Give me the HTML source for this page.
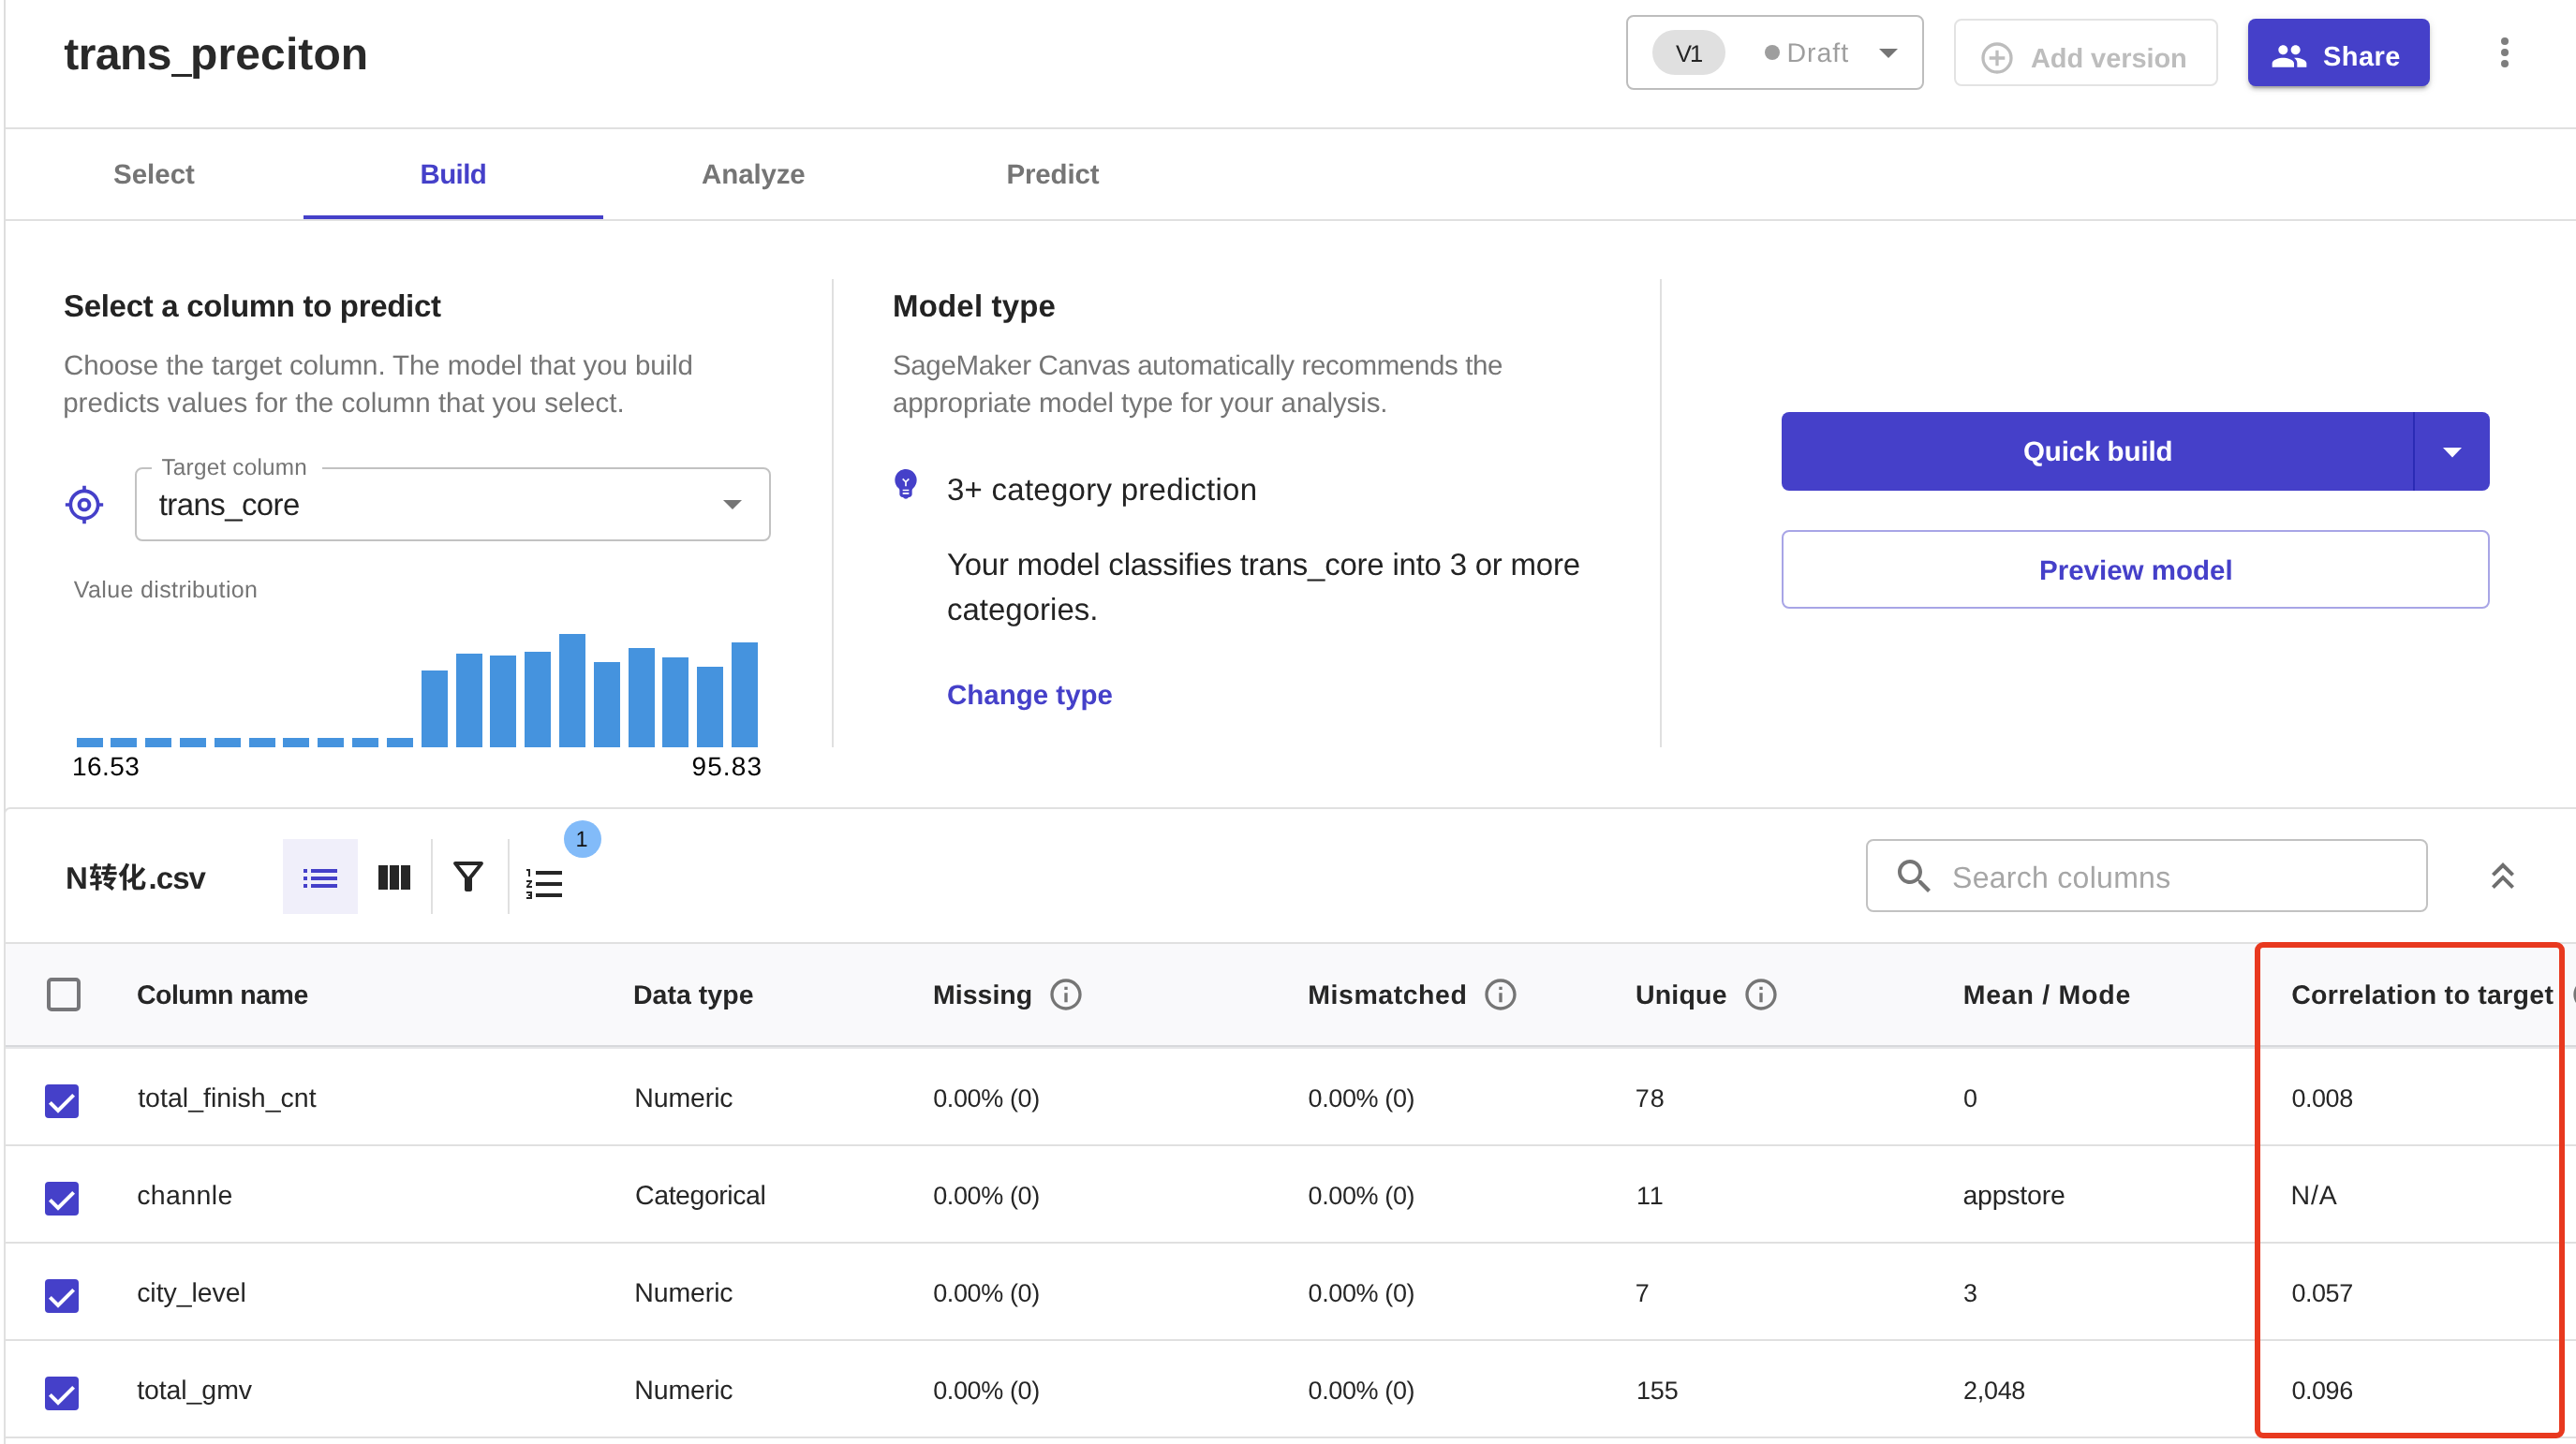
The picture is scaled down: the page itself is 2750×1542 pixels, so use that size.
<!DOCTYPE html>
<html><head><meta charset="utf-8"><title>trans_preciton</title>
<style>
html,body{margin:0;padding:0;background:#fff;}
body{width:2750px;height:1542px;overflow:hidden;position:relative;font-family:"Liberation Sans",sans-serif;color:#232323;}
.a{position:absolute;}
.t{position:absolute;white-space:nowrap;line-height:1;}
#w{position:absolute;left:0;top:0;width:2750px;height:1542px;overflow:hidden;will-change:transform;text-rendering:geometricPrecision;}
.b{font-weight:bold;}
.hl{position:absolute;background:#e0e0e0;}
svg{position:absolute;overflow:visible;}
</style></head><body><div id="w">
<!-- left edge line -->
<div class="hl" style="left:4px;top:0;width:2px;height:1542px;background:#dedede"></div>

<!-- ===== HEADER ===== -->
<div class="t b" id="title1" style="left:68.3px;top:35px;font-size:48px;letter-spacing:-0.55px;color:#292929">trans</div><div class="a" style="left:183px;top:78.6px;width:22.2px;height:3.5px;background:#292929"></div><div class="t b" id="title2" style="left:203.1px;top:35px;font-size:48px;letter-spacing:0.10px;color:#292929">preciton</div>
<div class="hl" style="left:6px;top:136px;width:2744px;height:2px"></div>

<!-- version select -->
<div class="a" style="left:1736px;top:16px;width:314px;height:76px;border:2px solid #bdbdbd;border-radius:8px"></div>
<div class="a" style="left:1764px;top:32px;width:78px;height:48px;border-radius:24px;background:#e0e0e0"></div>
<div class="t" id="v1" style="left:1789px;top:46px;font-size:25.5px;letter-spacing:-2px;color:#232323">V1</div>
<div class="a" style="left:1884px;top:48px;width:16px;height:16px;border-radius:8px;background:#9e9e9e"></div>
<div class="t" id="draft" style="left:1907.5px;top:43px;font-size:28.5px;color:#9e9e9e;letter-spacing:0.95px">Draft</div>
<svg style="left:2004px;top:52px" width="24" height="12" viewBox="0 0 24 12"><path d="M2 0h20L12 10z" fill="#757575"/></svg>

<!-- add version -->
<div class="a" style="left:2086px;top:20px;width:278px;height:68px;border:2px solid #e3e3e3;border-radius:8px"></div>
<svg style="left:2114.3px;top:44.2px" width="36" height="36" viewBox="0 0 36 36"><circle cx="18" cy="18" r="15" fill="none" stroke="#bdbdbd" stroke-width="3.3"/><path d="M18 9.700v16.600M9.700 18h16.600" stroke="#bdbdbd" stroke-width="3.3" fill="none"/></svg>
<div class="t b" id="addv" style="left:2168px;top:49px;font-size:29px;color:#bdbdbd;letter-spacing:-0.08px">Add version</div>

<!-- share -->
<div class="a" style="left:2400px;top:20px;width:194px;height:72px;border-radius:8px;background:#4540c9;box-shadow:0 6px 2px -4px rgba(0,0,0,.2),0 4px 4px 0 rgba(0,0,0,.14),0 2px 10px 0 rgba(0,0,0,.12)"></div>
<svg style="left:2424px;top:40px" width="40" height="40" viewBox="0 0 24 24"><path fill="#fff" d="M16 11c1.66 0 2.99-1.34 2.99-3S17.66 5 16 5c-1.66 0-3 1.34-3 3s1.34 3 3 3zm-8 0c1.66 0 2.99-1.34 2.99-3S9.66 5 8 5C6.34 5 5 6.34 5 8s1.34 3 3 3zm0 2c-2.33 0-7 1.17-7 3.500V19h14v-2.500c0-2.330-4.670-3.500-7-3.500zm8 0c-.29 0-.62.02-.97.05 1.160.84 1.970 1.970 1.970 3.450V19h6v-2.500c0-2.330-4.670-3.500-7-3.500z"/></svg>
<div class="t b" id="share" style="left:2480px;top:47px;font-size:29px;letter-spacing:0.42px;color:#fff">Share</div>

<!-- kebab -->
<div class="a" style="left:2670px;top:40px;width:8px;height:8px;border-radius:4px;background:#7e7e7e"></div>
<div class="a" style="left:2670px;top:52px;width:8px;height:8px;border-radius:4px;background:#7e7e7e"></div>
<div class="a" style="left:2670px;top:64px;width:8px;height:8px;border-radius:4px;background:#7e7e7e"></div>

<!-- ===== TABS ===== -->
<div class="t b" id="tab1" style="left:121px;top:172px;font-size:29.5px;color:#757575">Select</div>
<div class="t b" id="tab2" style="left:448.5px;letter-spacing:-0.6px;top:172px;font-size:29.5px;color:#4540c9">Build</div>
<div class="t b" id="tab3" style="left:749.12px;letter-spacing:-0.15px;top:172px;font-size:29.5px;color:#757575">Analyze</div>
<div class="t b" id="tab4" style="left:1074.5px;letter-spacing:-0.15px;top:172px;font-size:29.5px;color:#757575">Predict</div>
<div class="a" style="left:324px;top:230px;width:320px;height:4px;background:#4540c9"></div>
<div class="hl" style="left:6px;top:234px;width:2744px;height:2px"></div>


<!-- ===== SECTION 2 ===== -->
<div class="t b" id="h1" style="left:68px;top:310px;font-size:33px;letter-spacing:-0.31px;color:#232323">Select a column to predict</div>
<div class="t" id="d1a" style="left:68px;top:376px;font-size:29.5px;letter-spacing:-0.1px;color:#757575">Choose the target column. The model that you build</div>
<div class="t" id="d1b" style="left:67.2px;top:416px;font-size:29.5px;color:#757575;letter-spacing:0.02px">predicts values for the column that you select.</div>

<svg style="left:68px;top:517px" width="44" height="44" viewBox="0 0 24 24"><path fill="#4540c9" d="M12 8c-2.21 0-4 1.79-4 4s1.790 4 4 4 4-1.790 4-4-1.790-4-4-4zm8.940 3c-.46-4.170-3.770-7.480-7.940-7.940V1h-2v2.060C6.830 3.520 3.520 6.830 3.060 11H1v2h2.060c.46 4.170 3.770 7.480 7.940 7.940V23h2v-2.060c4.170-.46 7.480-3.770 7.940-7.940H23v-2h-2.060zM12 19c-3.870 0-7-3.130-7-7s3.130-7 7-7 7 3.130 7 7-3.130 7-7 7z"/><circle cx="12" cy="12" r="1.85" fill="#fff"/></svg>

<div class="a" style="left:144.3px;top:498.6px;width:675px;height:75px;border:2px solid #c2c2c2;border-radius:8px"></div>
<div class="a" style="left:162px;top:495px;width:182px;height:10px;background:#fff"></div>
<div class="t" id="lbl" style="left:172.500px;top:488px;font-size:24.3px;letter-spacing:0.22px;color:#757575">Target column</div>
<div class="t" id="tc" style="left:169.8px;top:522px;font-size:33px;letter-spacing:-0.6px;color:#232323">trans_core</div>
<svg style="left:770px;top:534px" width="24" height="12" viewBox="0 0 24 12"><path d="M2 0h20L12 10z" fill="#757575"/></svg>

<div class="t" id="vd" style="left:78.8px;top:618px;font-size:25px;letter-spacing:0.37px;color:#757575">Value distribution</div>
<style>.bar{width:28px;background:#4593de}</style>
<div class="a bar" style="left:81.5px;top:788.0px;height:10.0px"></div>
<div class="a bar" style="left:118.3px;top:788.0px;height:10.0px"></div>
<div class="a bar" style="left:155.1px;top:788.0px;height:10.0px"></div>
<div class="a bar" style="left:192.0px;top:788.0px;height:10.0px"></div>
<div class="a bar" style="left:228.8px;top:788.0px;height:10.0px"></div>
<div class="a bar" style="left:265.6px;top:788.0px;height:10.0px"></div>
<div class="a bar" style="left:302.4px;top:788.0px;height:10.0px"></div>
<div class="a bar" style="left:339.2px;top:788.0px;height:10.0px"></div>
<div class="a bar" style="left:376.1px;top:788.0px;height:10.0px"></div>
<div class="a bar" style="left:412.9px;top:788.0px;height:10.0px"></div>
<div class="a bar" style="left:449.7px;top:716.1px;height:81.9px"></div>
<div class="a bar" style="left:486.5px;top:698.1px;height:99.9px"></div>
<div class="a bar" style="left:523.3px;top:700.1px;height:97.9px"></div>
<div class="a bar" style="left:560.2px;top:695.7px;height:102.3px"></div>
<div class="a bar" style="left:597.0px;top:677.2px;height:120.8px"></div>
<div class="a bar" style="left:633.8px;top:706.5px;height:91.5px"></div>
<div class="a bar" style="left:670.6px;top:692.0px;height:106.0px"></div>
<div class="a bar" style="left:707.4px;top:702.1px;height:95.9px"></div>
<div class="a bar" style="left:744.3px;top:712.1px;height:85.9px"></div>
<div class="a bar" style="left:781.1px;top:686.4px;height:111.6px"></div>

<div class="t" id="n1" style="left:77.12px;top:805px;font-size:28px;color:#000;letter-spacing:0.40px">16.53</div>
<div class="t" id="n2" style="left:738.5px;top:805px;font-size:28px;color:#000;letter-spacing:1.10px">95.83</div>

<div class="hl" style="left:888px;top:298px;width:2px;height:500px"></div>
<div class="hl" style="left:1772px;top:298px;width:2px;height:500px"></div>

<div class="t b" id="h2" style="left:953px;top:310px;font-size:33px;color:#232323;letter-spacing:0.18px">Model type</div>
<div class="t" id="d2a" style="left:953px;top:376px;font-size:29.5px;letter-spacing:-0.36px;color:#757575">SageMaker Canvas automatically recommends the</div>
<div class="t" id="d2b" style="left:953px;top:416px;font-size:29.5px;letter-spacing:-0.11px;color:#757575">appropriate model type for your analysis.</div>
<svg style="left:947px;top:496px" width="40" height="40" viewBox="0 0 24 24"><path fill="#4540c9" d="M12 3c-.46 0-.93.04-1.400.14-2.760.53-4.960 2.760-5.480 5.520-.48 2.610.48 5.010 2.220 6.560.43.38.66.91.66 1.470V19c0 1.100.9 2 2 2h.28c.35.6.98 1 1.720 1s1.380-.4 1.720-1H14c1.100 0 2-.9 2-2v-2.310c0-.55.22-1.090.64-1.460C18.090 13.950 19 12.080 19 10c0-3.870-3.130-7-7-7zm2 16h-4v-1h4v1zm0-2h-4v-1h4v1zm-1.500-5.590V14h-1v-2.590L9.670 9.590l.71-.71L12 10.500l1.620-1.620.71.71-1.830 1.820z"/></svg>
<div class="t" id="cat" style="left:1011px;top:506px;font-size:33px;letter-spacing:0.26px;color:#232323">3+ category prediction</div>
<div class="t" id="m1" style="left:1011px;top:586px;font-size:33px;letter-spacing:-0.23px;color:#232323">Your model classifies trans_core into 3 or more</div>
<div class="t" id="m2" style="left:1011px;top:634px;font-size:33px;color:#232323">categories.</div>
<div class="t b" id="chg" style="left:1011px;top:728px;font-size:29.5px;color:#4540c9">Change type</div>

<div class="a" style="left:1902px;top:440px;width:756px;height:84px;border-radius:8px;background:#4540c9"></div>
<div class="a" style="left:2576px;top:440px;width:2px;height:84px;background:#2b2bb5"></div>
<div class="t b" id="qb" style="left:2160px;top:468px;font-size:29.5px;letter-spacing:-0.1px;color:#fff">Quick build</div>
<svg style="left:2606px;top:477.5px" width="24" height="12" viewBox="0 0 24 12"><path d="M2 0h20L12 10.500z" fill="#fff"/></svg>
<div class="a" style="left:1902px;top:566px;width:752px;height:80px;border:2px solid #a8a5e6;border-radius:8px"></div>
<div class="t b" id="pm" style="left:2177.04px;top:595px;font-size:29.5px;color:#4540c9">Preview model</div>


<!-- ===== SECTION 3 : data panel ===== -->
<div class="a" style="left:4px;top:862px;width:2760px;height:700px;border:2px solid #e0e0e0;border-radius:7px 0 0 7px;box-sizing:border-box"></div>
<div class="t b" id="fn1" style="left:70px;top:920.5px;font-size:33px;color:#262626">N</div>
<svg style="left:95.04px;top:921.4px" width="61.4" height="30.7" viewBox="0 -880 2000 1000"><g transform="scale(1,-1)" fill="#262626"><path d="M73 310C81 319 119 325 150 325H225V211L28 185L51 70L225 99V-88H339V119L453 140L448 243L339 227V325H414V433H339V573H225V433H165C193 493 220 563 243 635H423V744H276C284 772 291 801 297 829L181 850C176 815 170 779 162 744H36V635H136C117 566 99 511 90 490C72 446 58 417 37 411C50 383 68 331 73 310ZM427 557V446H548C528 375 507 309 489 256H756C729 220 700 181 670 143C639 162 607 179 577 195L500 118C609 57 738 -36 802 -95L880 -1C851 24 810 54 765 84C829 166 896 256 948 331L863 373L845 367H649L671 446H967V557H701L721 634H932V743H748L770 834L651 848L627 743H462V634H600L579 557Z"/><path transform="translate(1000,0)" d="M284 854C228 709 130 567 29 478C52 450 91 385 106 356C131 380 156 408 181 438V-89H308V241C336 217 370 181 387 158C424 176 462 197 501 220V118C501 -28 536 -72 659 -72C683 -72 781 -72 806 -72C927 -72 958 1 972 196C937 205 883 230 853 253C846 88 838 48 794 48C774 48 697 48 677 48C637 48 631 57 631 116V308C751 399 867 512 960 641L845 720C786 628 711 545 631 472V835H501V368C436 322 371 284 308 254V621C345 684 379 750 406 814Z"/></g></svg>
<div class="t b" id="fn2" style="left:158.6px;top:920.5px;font-size:33px;letter-spacing:-0.97px;color:#262626">.csv</div>

<div class="a" style="left:302px;top:896px;width:80px;height:80px;background:#f0effa"></div>
<svg style="left:318px;top:914px" width="48" height="48" viewBox="0 0 24 24"><path fill="#4540c9" d="M3 13h2v-2H3v2zm0 4h2v-2H3v2zm0-8h2V7H3v2zm4 4h14v-2H7v2zm0 4h14v-2H7v2zM7 7v2h14V7H7z"/></svg>
<svg style="left:396px;top:914px" width="48" height="48" viewBox="0 0 24 24"><path fill="#262626" d="M10 18h5V5h-5v13zm-6 0h5V5H4v13zM16 5v13h5V5h-5z"/></svg>
<div class="hl" style="left:460px;top:896px;width:2px;height:80px"></div>
<svg style="left:476px;top:912px" width="48" height="48" viewBox="0 0 24 24"><path fill="#262626" d="M7 6h10l-5.010 6.300L7 6zm-2.750-.39C6.270 8.200 10 13 10 13v6c0 .55.45 1 1 1h2c.55 0 1-.45 1-1v-6s3.720-4.800 5.740-7.390c.51-.66.04-1.610-.79-1.610H5.040c-.83 0-1.300.95-.79 1.610z"/></svg>
<div class="hl" style="left:542px;top:896px;width:2px;height:80px"></div>
<svg style="left:558px;top:920px" width="48" height="48" viewBox="0 0 24 24"><path fill="#262626" d="M2 17h2v.5H3v1h1v.5H2v1h3v-4H2v1zm1-9h1V4H2v1h1v3zm-1 3h1.800L2 13.100v.9h3v-1H3.200L5 10.900V10H2v1zm5-6v2h14V5H7zm0 14h14v-2H7v2zm0-6h14v-2H7v2z"/></svg>
<div class="a" style="left:602px;top:876px;width:40px;height:40px;border-radius:20px;background:#82bbf9"></div>
<div class="t" id="bdg" style="left:614.58px;top:885.3px;font-size:23.5px;color:#111">1</div>

<div class="a" style="left:1992px;top:896px;width:596px;height:74px;border:2px solid #c2c2c2;border-radius:8px"></div>
<svg style="left:2020px;top:911.8px" width="48" height="48" viewBox="0 0 24 24"><path fill="#757575" d="M15.500 14h-.79l-.28-.27C15.410 12.590 16 11.110 16 9.500 16 5.910 13.090 3 9.500 3S3 5.910 3 9.500 5.910 16 9.500 16c1.610 0 3.090-.59 4.230-1.570l.27.28v.79l5 4.990L20.490 19l-4.990-5zm-6 0C7.010 14 5 11.990 5 9.500S7.010 5 9.500 5 14 7.010 14 9.500 11.990 14 9.500 14z"/></svg>
<div class="t" id="srch" style="left:2084px;top:921px;font-size:32px;letter-spacing:0.29px;color:#a6a6a6">Search columns</div>
<svg style="left:2648.3px;top:911.4px" width="48" height="48" viewBox="0 0 24 24"><path fill="#6e6e6e" d="M6 17.590L7.410 19 12 14.420 16.590 19 18 17.590l-6-6zM6 11l1.410 1.410L12 7.830l4.590 4.580L18 11l-6-6z"/></svg>

<!-- table header -->
<div class="a" style="left:6px;top:1006px;width:2744px;height:112px;background:#f9f9fb"></div>
<div class="hl" style="left:6px;top:1006px;width:2744px;height:2px"></div>
<div class="a" style="left:6px;top:1116px;width:2744px;height:2px;background:#d8d9dc"></div>
<div class="a" style="left:6px;top:1118px;width:2744px;height:2px;background:#e6e7e9"></div>
<div class="a" style="left:50px;top:1044px;width:28px;height:28px;border:4px solid #77777a;border-radius:5px"></div>
<style>.th{font-weight:bold;font-size:28.5px;color:#262626;top:1049.0px} .r{font-size:28.5px;color:#262626} .n{font-size:27px;color:#262626}</style>
<div class="t th" id="th1" style="left:146px;letter-spacing:-0.52px">Column name</div>
<div class="t th" id="th2" style="left:676px;letter-spacing:0.03px">Data type</div>
<div class="t th" id="th3" style="left:996.0px;letter-spacing:0.01px">Missing</div>
<div class="t th" id="th4" style="left:1396.3px;letter-spacing:0.54px">Mismatched</div>
<div class="t th" id="th5" style="left:1746px;letter-spacing:0.18px">Unique</div>
<div class="t th" id="th6" style="left:2095.7px;letter-spacing:0.76px">Mean / Mode</div>
<div class="t th" id="th7" style="left:2446.2px;letter-spacing:0.29px">Correlation to target</div>
<svg style="left:1118.0px;top:1041.9px" width="40" height="40" viewBox="0 0 24 24"><path fill="#757575" d="M11 7h2v2h-2zm0 4h2v6h-2zm1-9C6.480 2 2 6.480 2 12s4.480 10 10 10 10-4.480 10-10S17.520 2 12 2zm0 18c-4.410 0-8-3.590-8-8s3.590-8 8-8 8 3.590 8 8-3.590 8-8 8z"/></svg>
<svg style="left:1581.9px;top:1041.9px" width="40" height="40" viewBox="0 0 24 24"><path fill="#757575" d="M11 7h2v2h-2zm0 4h2v6h-2zm1-9C6.480 2 2 6.480 2 12s4.480 10 10 10 10-4.480 10-10S17.520 2 12 2zm0 18c-4.410 0-8-3.590-8-8s3.590-8 8-8 8 3.590 8 8-3.590 8-8 8z"/></svg>
<svg style="left:1859.9px;top:1041.9px" width="40" height="40" viewBox="0 0 24 24"><path fill="#757575" d="M11 7h2v2h-2zm0 4h2v6h-2zm1-9C6.480 2 2 6.480 2 12s4.480 10 10 10 10-4.480 10-10S17.520 2 12 2zm0 18c-4.410 0-8-3.590-8-8s3.590-8 8-8 8 3.590 8 8-3.590 8-8 8z"/></svg>
<svg style="left:2743.7px;top:1041.9px" width="40" height="40" viewBox="0 0 24 24"><path fill="#757575" d="M11 7h2v2h-2zm0 4h2v6h-2zm1-9C6.480 2 2 6.480 2 12s4.480 10 10 10 10-4.480 10-10S17.520 2 12 2zm0 18c-4.410 0-8-3.590-8-8s3.590-8 8-8 8 3.590 8 8-3.590 8-8 8z"/></svg>

<!-- rows -->
<svg style="left:42px;top:1152.0px" width="48" height="48" viewBox="0 0 24 24"><rect x="3" y="3" width="18" height="18" rx="2" fill="#4540c9"/><path d="M5.700 12.700L10 17l8.300-8.300" fill="none" stroke="#fff" stroke-width="2"/></svg>
<div class="t r" id="r0a" style="left:147.16px;top:1159.0px;letter-spacing:0.02px">total_finish_cnt</div><div class="t r" id="r0b" style="left:677.3px;top:1159.0px;letter-spacing:-0.13px">Numeric</div><div class="t n" id="r0c" style="left:996.24px;top:1160.0px;letter-spacing:-0.39px">0.00% (0)</div><div class="t n" id="r0d" style="left:1396.6px;top:1160.0px;letter-spacing:-0.39px">0.00% (0)</div><div class="t n" id="r0e" style="left:1745.7px;top:1160.0px;letter-spacing:1.10px">78</div><div class="t n" id="r0f" style="left:2096px;top:1160.0px">0</div><div class="t n" id="r0g" style="left:2446.5px;top:1160.0px;letter-spacing:-0.47px">0.008</div>
<div class="hl" style="left:6px;top:1222.0px;width:2744px;height:2px"></div>
<svg style="left:42px;top:1256.0px" width="48" height="48" viewBox="0 0 24 24"><rect x="3" y="3" width="18" height="18" rx="2" fill="#4540c9"/><path d="M5.700 12.700L10 17l8.300-8.300" fill="none" stroke="#fff" stroke-width="2"/></svg>
<div class="t r" id="r1a" style="left:146.2px;top:1263.0px;letter-spacing:0.37px">channle</div><div class="t r" id="r1b" style="left:678.1px;top:1263.0px;letter-spacing:-0.45px">Categorical</div><div class="t n" id="r1c" style="left:996.24px;top:1264.0px;letter-spacing:-0.39px">0.00% (0)</div><div class="t n" id="r1d" style="left:1396.6px;top:1264.0px;letter-spacing:-0.39px">0.00% (0)</div><div class="t n" id="r1e" style="left:1746.9px;top:1264.0px;letter-spacing:0.8px">11</div><div class="t r" id="r1f" style="left:2095.5px;top:1263.0px;letter-spacing:-0.24px">appstore</div><div class="t r" id="r1g" style="left:2445.5px;top:1263.0px;letter-spacing:0.90px">N/A</div>
<div class="hl" style="left:6px;top:1326.0px;width:2744px;height:2px"></div>
<svg style="left:42px;top:1360.0px" width="48" height="48" viewBox="0 0 24 24"><rect x="3" y="3" width="18" height="18" rx="2" fill="#4540c9"/><path d="M5.700 12.700L10 17l8.300-8.300" fill="none" stroke="#fff" stroke-width="2"/></svg>
<div class="t r" id="r2a" style="left:146.2px;top:1367.0px;letter-spacing:-0.07px">city_level</div><div class="t r" id="r2b" style="left:677.3px;top:1367.0px;letter-spacing:-0.13px">Numeric</div><div class="t n" id="r2c" style="left:996.24px;top:1368.0px;letter-spacing:-0.39px">0.00% (0)</div><div class="t n" id="r2d" style="left:1396.6px;top:1368.0px;letter-spacing:-0.39px">0.00% (0)</div><div class="t n" id="r2e" style="left:1745.7px;top:1368.0px">7</div><div class="t n" id="r2f" style="left:2096px;top:1368.0px">3</div><div class="t n" id="r2g" style="left:2446.5px;top:1368.0px;letter-spacing:-0.47px">0.057</div>
<div class="hl" style="left:6px;top:1430.0px;width:2744px;height:2px"></div>
<svg style="left:42px;top:1464.0px" width="48" height="48" viewBox="0 0 24 24"><rect x="3" y="3" width="18" height="18" rx="2" fill="#4540c9"/><path d="M5.700 12.700L10 17l8.300-8.300" fill="none" stroke="#fff" stroke-width="2"/></svg>
<div class="t r" id="r3a" style="left:146.2px;top:1471.0px;letter-spacing:-0.09px">total_gmv</div><div class="t r" id="r3b" style="left:677.3px;top:1471.0px;letter-spacing:-0.13px">Numeric</div><div class="t n" id="r3c" style="left:996.24px;top:1472.0px;letter-spacing:-0.39px">0.00% (0)</div><div class="t n" id="r3d" style="left:1396.6px;top:1472.0px;letter-spacing:-0.39px">0.00% (0)</div><div class="t n" id="r3e" style="left:1746.9px;top:1472.0px;letter-spacing:-0.05px">155</div><div class="t n" id="r3f" style="left:2096px;top:1472.0px;letter-spacing:-0.30px">2,048</div><div class="t n" id="r3g" style="left:2446.5px;top:1472.0px;letter-spacing:-0.47px">0.096</div>
<div class="hl" style="left:6px;top:1534.0px;width:2744px;height:2px"></div>

<!-- red highlight -->
<div class="a" style="left:2406.5px;top:1006px;width:319.7px;height:518px;border:6px solid #e8391f;border-radius:9px"></div>

</div></body></html>
